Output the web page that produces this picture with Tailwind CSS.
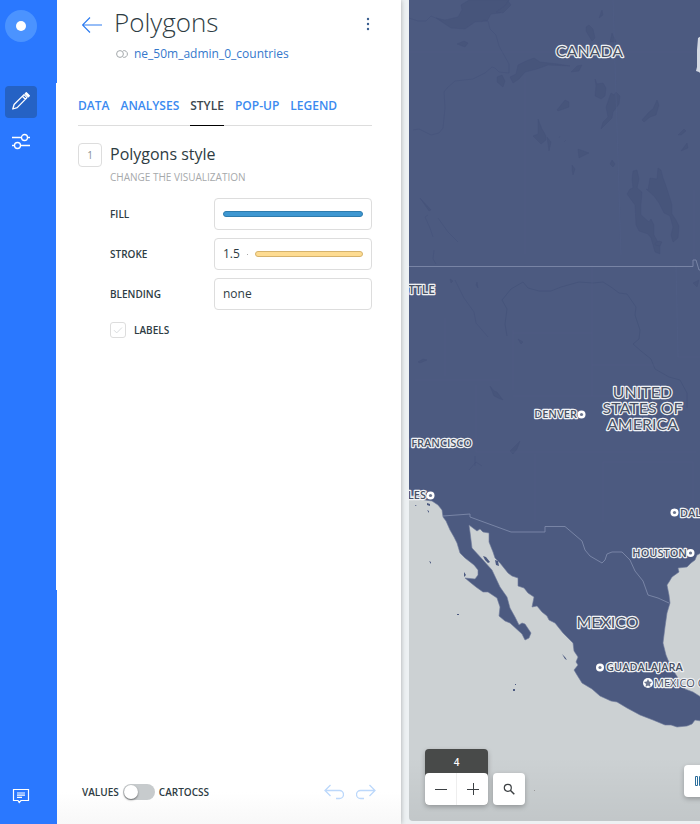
<!DOCTYPE html>
<html lang="en">
<head>
<meta charset="utf-8">
<meta name="viewport" content="width=device-width, initial-scale=1">
<title>Polygons</title>
<script src="https://cdn.jsdelivr.net/npm/@tailwindcss/browser@4"></script>
</head>
<body class="flex h-screen overflow-hidden bg-[#edf1f3] font-['Open_Sans',sans-serif] text-[#2e3c43]">

<!-- Main navigation -->
<nav aria-label="Main" class="relative z-20 flex w-[57px] shrink-0 flex-col items-start bg-[#2a78ff] pt-[10px] pb-3 pl-[5px]">
  <a href="#" aria-label="Home" class="flex size-8 items-center justify-center rounded-full bg-[#4b93ff]"><span class="size-[10px] rounded-full bg-white"></span></a>
  <a href="#" aria-label="Edit" class="mt-11 flex size-8 items-center justify-center rounded bg-[#2562c4]">
    <svg class="size-5" viewBox="0 0 20 20" fill="none" stroke="#fff" stroke-width="1.300" stroke-linejoin="round"><path d="M1.800 17l1.300-4.500L13 2.600l3 3L6.200 15.600zM11.400 4.200l3 3"/><path d="M14.300 1.700l1-1 3 3-1 1z" fill="#fff"/></svg>
  </a>
  <a href="#" aria-label="Settings" class="mt-2 flex size-8 items-center justify-center">
    <svg class="size-5" viewBox="0 0 20 20" fill="none" stroke="#fff" stroke-width="1.300"><path d="M1 5.500h9.500M16.500 5.500H19M1 13.500h2.500M9.500 13.500H19"/><circle cx="13.500" cy="5.500" r="3"/><circle cx="6.500" cy="13.500" r="3"/></svg>
  </a>
  <button type="button" aria-label="Feedback" class="mt-auto flex size-8 items-center justify-center">
    <svg class="size-5" viewBox="0 0 20 20" fill="none" stroke="#fff" stroke-width="1.200"><path d="M2.500 3.500h15v11H10L8.200 16.500 7 14.500H2.500zM6 7h8M6 9.200h8M6 11.400h5"/></svg>
  </button>
  <span class="absolute top-[83px] right-0 h-[507px] w-px bg-white"></span>
</nav>

<!-- Layer editor -->
<main class="relative z-10 flex w-[344px] shrink-0 flex-col bg-white pr-[29px] pl-[21px] shadow-[0_0_5px_rgba(0,0,0,0.3)]">
  <header class="flex pt-1">
    <a href="#" aria-label="Back" class="mt-[11px] ml-1 h-5 w-8 shrink-0">
      <svg class="h-5 w-5" viewBox="0 0 20 20" fill="none" stroke="#2e7cf0" stroke-width="1.200"><path d="M20 10H.500M8 2.500L.500 10 8 17.500"/></svg>
    </a>
    <div class="min-w-0 flex-1">
      <h1 class="text-[26px] leading-9 font-light">Polygons</h1>
      <a href="#" class="mt-1 flex items-center gap-[6px] pl-[2px] text-xs leading-5 text-[#3478cc]">
        <svg class="h-3 w-3" viewBox="0 0 12 12" fill="none" stroke="#a3a8ab"><circle cx="4" cy="6" r="3.400"/><path d="M7.200 2.700a3.400 3.400 0 1 1 0 6.600"/></svg>
        ne_50m_admin_0_countries
      </a>
    </div>
    <button type="button" aria-label="More options" class="mt-2 flex h-6 w-2 items-center justify-center">
      <svg class="h-4 w-1" viewBox="0 0 4 16" fill="#3a5f90"><circle cx="2" cy="3" r="1.200"/><circle cx="2" cy="8" r="1.200"/><circle cx="2" cy="13" r="1.200"/></svg>
    </button>
  </header>

  <nav aria-label="Layer sections" class="mt-[30px] flex gap-[11px] border-b border-[#ddd] text-xs leading-6 font-semibold text-[#3b8af0]">
    <a href="#" class="pb-[7px]">DATA</a>
    <a href="#" class="pb-[7px]">ANALYSES</a>
    <a href="#" aria-current="page" class="-mb-px border-b border-black pb-[7px] text-[#3d484e]">STYLE</a>
    <a href="#" class="pb-[7px]">POP-UP</a>
    <a href="#" class="pb-[7px]">LEGEND</a>
  </nav>

  <section class="mt-[17px] flex gap-2">
    <span class="flex size-6 shrink-0 items-center justify-center rounded border border-[#ddd] text-[10px] text-[#8a8f92]">1</span>
    <form class="min-w-0 flex-1">
      <h2 class="text-base leading-[22px]">Polygons style</h2>
      <p class="mt-1 text-[10px] leading-4 text-[#a6a9ab]">CHANGE THE VISUALIZATION</p>
      <div class="mt-[13px] flex flex-col gap-2">
        <div class="flex items-center">
          <label for="fill" class="w-[104px] text-[10px] font-semibold">FILL</label>
          <button id="fill" type="button" class="flex h-8 flex-1 items-center rounded border border-[#ddd] px-2"><span class="h-[6px] w-full rounded-full border border-[#2e7cae] bg-[#3e97d1]"></span></button>
        </div>
        <div class="flex items-center">
          <label for="stroke" class="w-[104px] text-[10px] font-semibold">STROKE</label>
          <div class="flex h-8 min-w-0 flex-1 items-center rounded border border-[#ddd] px-2">
            <input id="stroke" type="text" value="1.5" class="w-5 text-xs">
            <span class="ml-1 size-px bg-[#aaa]"></span>
            <button type="button" aria-label="Stroke color" class="ml-[7px] h-[6px] flex-1 rounded-full border border-[#d6b36c] bg-[#fedc92]"></button>
          </div>
        </div>
        <div class="flex items-center">
          <label for="blending" class="w-[104px] text-[10px] font-semibold">BLENDING</label>
          <select id="blending" class="h-8 min-w-0 flex-1 appearance-none rounded border border-[#ddd] px-2 text-xs"><option>none</option><option>multiply</option><option>screen</option></select>
        </div>
      </div>
      <div class="mt-3 flex items-center gap-2">
        <span class="relative size-4">
          <input id="labels" type="checkbox" class="block size-4 appearance-none rounded-[3px] border border-[#ddd]">
          <svg class="pointer-events-none absolute inset-0 size-4" viewBox="0 0 16 16" fill="none" stroke="#d9dcde"><path d="M4 8.200l2.700 2.700L12 5.500"/></svg>
        </span>
        <label for="labels" class="text-[10px] leading-4 font-semibold">LABELS</label>
      </div>
    </form>
  </section>

  <footer class="relative mt-auto flex h-16 items-center pl-1">
    <div class="absolute -right-[29px] bottom-0 -left-[21px] h-8 bg-linear-to-t from-[#f8f8f8] to-transparent"></div>
    <div class="relative flex w-full items-center gap-1 text-[10px] font-semibold">
      <label for="mode">VALUES</label>
      <input id="mode" type="checkbox" role="switch" aria-label="Edit as CartoCSS" class="h-4 w-8 appearance-none rounded-full bg-[#c7cbcd] before:m-px before:block before:size-[14px] before:rounded-full before:bg-white before:shadow-[0_1px_2px_rgba(0,0,0,0.5)]">
      <label for="mode">CARTOCSS</label>
      <button type="button" aria-label="Undo" disabled class="ml-auto"><svg class="h-4 w-5" viewBox="0 0 20 16" fill="none" stroke="#bcd8fb" stroke-width="1.300"><path d="M6.500 1L1 6.500 6.500 12M1 6.500h14.500a3.800 3.800 0 0 1 0 8H12"/></svg></button>
      <button type="button" aria-label="Redo" disabled class="ml-2 -mr-1"><svg class="h-4 w-5" viewBox="0 0 20 16" fill="none" stroke="#bcd8fb" stroke-width="1.300"><path d="M13.500 1L19 6.500 13.500 12M19 6.500H4.500a3.800 3.800 0 0 0 0 8H8"/></svg></button>
    </div>
  </footer>
</main>

<!-- Map -->
<section aria-label="Map" class="relative mb-[3px] ml-2 min-w-0 flex-1 overflow-hidden rounded-bl bg-[#ccd1d3]">
  <svg class="absolute inset-0 h-full w-full" viewBox="409 0 291 821" preserveAspectRatio="xMinYMin slice">
    <path fill="#4c5a80" stroke="#6e7b9b" stroke-width=".6" stroke-linejoin="round" d="M408-1H701V553L697 555 695 560 691 563 687 567 678 568 679 572 672 577 669 582 667 585 668 590 669 595 670 603 667 613 665 627 663 643 666 655 668 660 673 670 678 678 682 683 685 689 693 692 701 697V721L695 720 692 724 687 726 677 727 671 725 665 725 653 720 640 715 627 708 617 702 611 701 600 696 592 689 582 683 577 675 574 670 578 665 576 662 578 657 574 651 573 643 563 633 555 623 549 620 547 616 542 612 537 606 532 607 534 597 528 593 524 588 518 586 518 578 512 576 508 573 500 563 495 558 493 552 489 542 489 533 483 532 480 529 477 531 469 525 470 532 472 548 483 560 492 570 500 587 507 597 510 608 515 617 519 625 522 623 525 624 531 633 529 638 525 640 522 634 510 623 505 621 499 616 500 607 497 598 488 592 483 592 476 587 471 583 465 578 475 579 478 575 478 570 474 565 465 558 460 553 457 543 454 537 450 530 446 521 443 517 442 510 438 505 432 501 425 500 416 496 408 495Z"/>
    <g fill="#47557b" stroke="#44527a" stroke-width=".4" stroke-linejoin="round">
      <path d="M436 18l9 2 13-3 4-7-1-5 8-5h40l-9 13-9 1-4 7-12 1-10 7-14-1z"/>
      <path d="M457 44l7-3 4 2-3 4z M496 12l10-7 2-4 3 4-8 8z M510 77l6-3 2-9 8-4 8-3 6 4 18 2 12 2-22-1-11 4-12 3-6 7-6 4z M497 77l5-2 3 6-2 6-6-5z M571 72l6-6 5-1-3 6z M595 79l2 5 6-1 3 5-1 8-4 3-6-3 1-10z M611 93l3 2 2-3 4 4-1 8-6 8-1 6-11 11 2-7 5-5-2-10z M557 110l8-10 4 2v5l-11 4z M642 120l7-8 4-3 4-9 2 5-3 10-6 2-6 5z M586 27l3-2 4 4 2 9-3 3-6-10z M610 42l2-9 4 9z M599 18l3-8 1 5z M538 119l4 10 4 7v4l-5 4-8-8 5-2z M547 137l4 5-2 9z M578 149l11 4-10 5z M572 165l3 4-2 6-1-5z M610 164l2-4 3 4-2 3z M678 135l6-6 2 2-5 4z M681 151l6-8 1 5z M559 138l1-2M564 142l2-2"/>
      <path d="M627 194l3-5 3-1-1-9 1-8 4-1 2 9-2 9 5 4-1 12 0 11 8 7 2-3 3 6 0 10 6 11v8l-5-2-4-14-3-4-9-3-3-6-1-20z"/>
      <path d="M648 190l2-12 7 1 1-11 3 2 2 8 2 5 3 9 4 13 0 9 4 6 3 6-1 12-5 4-2-7 2-8-3-11-6-3-5-10-5-7-8-7z"/>
      <path d="M420 198l11 12-2 1z M490 386l4 5 3 1 6 8-5-2-4-2z M655 243l4-2 3 1-2 4-5-1z M418 362l5-3 4 1-7 3z M450 279l3 2-2 2z M477 282l1 6-2-3z M510 451l5-5 5-5-3 8-4 5z M518 339l5 3-2 2z M693 283l6-3-2 7z"/>
    </g>
    <g fill="none" stroke="#45537a" stroke-width=".6">
      <path d="M409 18l9 3 8 0 5-5 7 3 4 2M481 22l3-2 4 1 2 8 6 6 3 11 10 18v9l-10-1-4-4-3-1-7 6-12 6-18 2-8 7-3 4 1 16-2 20-4 5-8 2-8-4-4-2-6 1M428 215l-3 2 5 11 3 9M438 218l10 14 10 10M434 250l-1 9 3 5"/>
      <path stroke-width=".9" d="M507 336l-2-12 2-15-5-9 9-11 12-7 5 6 11 3 12 0 10-4 18-5 14 1 10-1 8 5 8 6 8 1 9 13-1 8 5 15-1 9-6 5 8 7 10 8 4 10 14 8 11 3 7 13 0 15"/>
      <path d="M455 280l9 18 10 14 2 11 12 14M469 470l7-8 6 4M475 456v10"/>
    </g>
    <g fill="none" stroke="#505f87" stroke-width=".5">
      <path d="M409 52h290M525 76v178M613 0l8 255M694 190v70M445 318v58M415 380h85M513 396h167M513 330v60M513 333h79v-68M592 333v63M592 365h65M476 385v67h220M535 454v68M603 522v-60h90v58M676 265l2 92h22"/>
    </g>
    <path d="M408 266.500H693V260H696L699 270H701M443 516L470 514V517L511 532H545V526.500H565L582 541 585 550 590 556 602 563 605 560 607 554 612 552H622L630 560 635 571 643 581 648 595 658 598 669 603" fill="none" stroke="#7d89a9" stroke-width=".9"/>
    <path d="M701 36l-3 2-1 12v17l-1 4 3 1 2 2z" fill="#d4d9e3"/>
    <g fill="#4c5a80"><path d="M483 556l3 1 4 5-2 1-3-3z M495 560l3 1 1 5-3-1z M429 561l2 1v2z M464 572l2 3-2 2z M427 503l3 1v2l-3-1z M427 510l2 1v2z M415 505l2 1h-2z M457 614h2v1h-2z M513 689h2v2h-2z M515 684h1v1h-1z M562 654l3 3 2 3-2-1z"/></g>

    <g fill="#fff"><circle cx="581.500" cy="414.500" r="4"/><circle cx="430.500" cy="495.500" r="4"/><circle cx="674.500" cy="512.500" r="4"/><circle cx="690.500" cy="553" r="4"/><circle cx="600" cy="667.500" r="4"/><circle cx="648" cy="683" r="5"/></g>
    <g fill="#6d778f"><circle cx="581.500" cy="414.500" r="1.600"/><circle cx="430.500" cy="495.500" r="1.600"/><circle cx="674.500" cy="512.500" r="1.600"/><circle cx="690.500" cy="553" r="1.600"/><circle cx="600" cy="667.500" r="1.600"/><path d="M648 679l1.200 2.600 2.800.400-2 2 .5 2.800-2.500-1.300-2.500 1.300.5-2.800-2-2 2.800-.400z"/></g>
    <g font-family="Lato, sans-serif" fill="#485164" stroke="#f0f2f5" stroke-width="2.400" stroke-linejoin="round" class="[paint-order:stroke]">
      <g font-size="16" text-anchor="middle">
        <text x="589.500" y="57">CANADA</text>
        <text x="642.500" y="398">UNITED</text>
        <text x="642.500" y="414">STATES OF</text>
        <text x="642.500" y="430">AMERICA</text>
        <text x="607.500" y="628">MEXICO</text>
      </g>
      <g font-size="11" font-weight="600" font-family="Open Sans, sans-serif">
        <text x="435" y="294" text-anchor="end" font-size="12">SEATTLE</text>
        <text x="577" y="418" text-anchor="end">DENVER</text>
        <text x="472" y="447" text-anchor="end">SAN FRANCISCO</text>
        <text x="426" y="499" text-anchor="end">LOS ANGELES</text>
        <text x="680" y="517">DALLAS</text>
        <text x="687" y="557" text-anchor="end">HOUSTON</text>
        <text x="606" y="671">GUADALAJARA</text>
        <text x="654" y="687" font-weight="400">MEXICO CITY</text>
      </g>
    </g>
  </svg>
  <div class="absolute inset-x-0 bottom-0 h-16 bg-linear-to-t from-black/5 to-transparent"></div>

  <div class="absolute bottom-4 left-4 flex items-end gap-[5px] text-[#3c4043]">
    <div class="w-[63px] rounded bg-[#484a49] shadow-[0_2px_5px_rgba(0,0,0,0.25)]">
      <output class="block h-6 pt-[3px] text-center text-[10px] leading-5 font-semibold text-white">4</output>
      <div class="flex h-8 overflow-hidden rounded bg-white">
        <button type="button" aria-label="Zoom out" class="flex flex-1 items-center justify-center border-r border-[#eee]"><svg class="size-3" viewBox="0 0 12 12" stroke="currentColor"><path d="M0 6.500h12"/></svg></button>
        <button type="button" aria-label="Zoom in" class="flex flex-1 items-center justify-center"><svg class="size-3" viewBox="0 0 12 12" stroke="currentColor"><path d="M0 6.500h12M6.500 0v12"/></svg></button>
      </div>
    </div>
    <button type="button" aria-label="Search" class="flex size-8 items-center justify-center rounded bg-white shadow-[0_2px_5px_rgba(0,0,0,0.25)]"><svg class="size-3" viewBox="0 0 12 12" fill="none" stroke="currentColor" stroke-width="1.200"><circle cx="4.800" cy="4.800" r="3.500"/><path d="M7.300 7.300L11.300 11.300" stroke-width="1.500"/></svg></button>
    <span class="mb-[14px] ml-1 size-px bg-[#999]"></span>
  </div>
  <button type="button" aria-label="Widgets" class="absolute -right-4 bottom-6 flex size-8 items-center justify-center rounded bg-white shadow-[0_2px_5px_rgba(0,0,0,0.25)]"><svg class="h-3 w-[10px]" viewBox="0 0 10 12" fill="none" stroke="#2c6f9c"><path d="M.500 1.500h2v9h-2zM4.500 1.500h2v9h-2zM8.500 1.500h1v9h-1z"/></svg></button>
</section>
</body>
</html>
